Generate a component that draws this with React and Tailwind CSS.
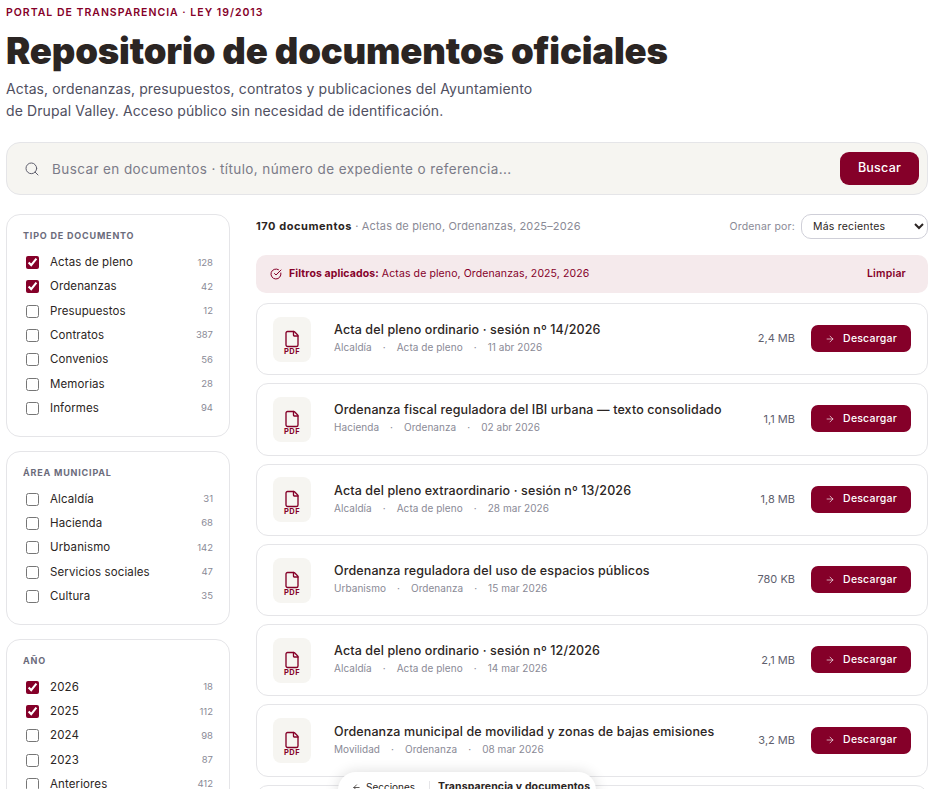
import { ArrowLeft, ArrowRight, File, Search } from "lucide-react";

const tipos = [
  ["Actas de pleno", 128, true],
  ["Ordenanzas", 42, true],
  ["Presupuestos", 12],
  ["Contratos", 387],
  ["Convenios", 56],
  ["Memorias", 28],
  ["Informes", 94],
];

const areas = [
  ["Alcaldía", 31],
  ["Hacienda", 68],
  ["Urbanismo", 142],
  ["Servicios sociales", 47],
  ["Cultura", 35],
];

const anios = [
  ["2026", 18, true],
  ["2025", 112, true],
  ["2024", 98],
  ["2023", 87],
  ["Anteriores", 412],
];

const docs = [
  ["Acta del pleno ordinario · sesión nº 14/2026", "Alcaldía", "Acta de pleno", "11 abr 2026", "2,4 MB"],
  ["Ordenanza fiscal reguladora del IBI urbana — texto consolidado", "Hacienda", "Ordenanza", "02 abr 2026", "1,1 MB"],
  ["Acta del pleno extraordinario · sesión nº 13/2026", "Alcaldía", "Acta de pleno", "28 mar 2026", "1,8 MB"],
  ["Ordenanza reguladora del uso de espacios públicos", "Urbanismo", "Ordenanza", "15 mar 2026", "780 KB"],
  ["Acta del pleno ordinario · sesión nº 12/2026", "Alcaldía", "Acta de pleno", "14 mar 2026", "2,1 MB"],
  ["Ordenanza municipal de movilidad y zonas de bajas emisiones", "Movilidad", "Ordenanza", "08 mar 2026", "3,2 MB"],
  ["Presupuesto general del ejercicio 2026", "Hacienda", "Presupuesto", "01 mar 2026", "4,6 MB"],
];

const FilterGroup = ({ title, items }) => (
  <section className="rounded-[14px] border border-[#e5e5e8] bg-white pl-[16px] pr-[16px] pt-[14px] pb-[15.5px]">
    <h3 className="mb-[7.5px] text-[9px] leading-[14px] font-bold tracking-[0.09em] text-[#6b6b7b] uppercase">
      {title}
    </h3>
    {items.map(([label, count, checked]) => (
      <label key={label} className="flex h-[24.3px] items-center">
        <input
          type="checkbox"
          defaultChecked={!!checked}
          className="ml-[3px] mr-[11px] size-[13px] accent-[#850029]"
        />
        <span className="flex-1 text-[11.5px] tracking-[0.01em] text-[#2b2523]">{label}</span>
        <span className="text-[9.5px] text-[#8a8a96]">{count}</span>
      </label>
    ))}
  </section>
);

const DocRow = ({ doc }) => {
  const [title, area, tipo, fecha, size] = doc;
  return (
    <article className="flex h-[72.3px] shrink-0 items-center rounded-[12px] border border-[#e5e5e8] bg-white pl-[16px] pr-[16px]">
      <div className="mr-[23px] flex h-[45px] w-[38px] shrink-0 flex-col items-center justify-center rounded-[8px] bg-[#f6f5f1] pt-[7px] text-[#850029]">
        <File size={18} strokeWidth={1.8} />
        <span className="text-[7.5px] leading-[8px] font-bold tracking-[0.06em]">PDF</span>
      </div>
      <div className="mb-[3px] min-w-0 flex-1">
        <h2 className="text-[12.5px] leading-[18px] font-[550] tracking-[0.01em] text-[#2b2523]">{title}</h2>
        <p className="mt-[1px] flex gap-[11px] text-[10px] leading-[14px] tracking-[0.005em] text-[#8a8a96]">
          <span>{area}</span>
          <span>·</span>
          <span>{tipo}</span>
          <span>·</span>
          <span>{fecha}</span>
        </p>
      </div>
      <span className="mb-[1px] mr-[16px] text-[11px] text-[#5f5f6e]">{size}</span>
      <button className="mb-[1px] flex h-[27px] w-[100px] items-center justify-center gap-[8px] rounded-[7px] bg-[#850029] text-[10.5px] font-medium tracking-[0.02em] text-white">
        <ArrowRight size={10} strokeWidth={1.6} />
        Descargar
      </button>
    </article>
  );
};

export default function App() {
  return (
    <div className="relative h-screen overflow-hidden bg-white pl-[6px] pr-[8px] font-['Inter',sans-serif]">
      <p className="pt-[6px] text-[10.5px] leading-[14px] font-semibold tracking-[0.095em] text-[#850029] uppercase">
        Portal de transparencia · Ley 19/2013
      </p>
      <h1 className="mt-[7px] text-[36.5px] leading-[48px] font-black tracking-[-0.005em] text-[#2b2523]">
        Repositorio de documentos oficiales
      </h1>
      <p className="mt-[3px] text-[14px] leading-[22px] tracking-[0.008em] text-[#4f4f5f]">
        Actas, ordenanzas, presupuestos, contratos y publicaciones del Ayuntamiento
        <br />
        de Drupal Valley. Acceso público sin necesidad de identificación.
      </p>

      <div className="mt-[20px] flex h-[53px] items-center rounded-[14px] border border-[#e5e5e8] bg-[#f6f5f1] pl-[17px] pr-[8px]">
        <Search size={16} strokeWidth={1.5} className="text-[#5f5f6e]" />
        <span className="ml-[12px] flex-1 pt-[1px] text-[13.5px] tracking-[0.03em] text-[#7b7b88]">
          Buscar en documentos · título, número de expediente o referencia...
        </span>
        <button className="h-[33px] w-[79px] rounded-[9px] bg-[#850029] text-[12.5px] font-medium tracking-[0.02em] text-white">
          Buscar
        </button>
      </div>

      <div className="mt-[19px] flex gap-[26px]">
        <aside className="flex w-[224px] shrink-0 flex-col gap-[13.6px]">
          <FilterGroup title="Tipo de documento" items={tipos} />
          <FilterGroup title="Área municipal" items={areas} />
          <FilterGroup title="Año" items={anios} />
        </aside>

        <main className="min-w-0 flex-1">
          <div className="flex h-[25px] items-center justify-between">
            <p className="text-[11px] tracking-[0.015em] text-[#8a8a96]">
              <strong className="font-bold tracking-[0.05em] text-[#2b2523]">170 documentos</strong> · Actas de pleno, Ordenanzas, 2025–2026
            </p>
            <div className="flex items-center gap-[6px]">
              <span className="text-[10.5px] tracking-[0.02em] text-[#8a8a96]">Ordenar por:</span>
              <select
                defaultValue="recientes"
                className="h-[25px] w-[127px] rounded-[10px] border border-[#cfcfd8] bg-white pl-[7px] text-[10.5px] tracking-[0.02em] text-[#2b2523]"
              >
                <option value="recientes">Más recientes</option>
                <option value="antiguos">Más antiguos</option>
              </select>
            </div>
          </div>

          <div className="mt-[16px] flex h-[38px] items-center rounded-[10px] bg-[#f5eaec] pl-[14px] pr-[22px] text-[#850029]">
            <svg width="12" height="12" viewBox="0 0 24 24" fill="none" stroke="currentColor" strokeWidth="2" strokeLinecap="round" strokeLinejoin="round">
              <path d="M21.8 10A10 10 0 1 1 17 3.3" />
              <path d="m9 11 3 3L22 4" />
            </svg>
            <p className="ml-[7px] flex-1 text-[10.5px] tracking-[0.01em]">
              <strong className="font-bold">Filtros aplicados:</strong> Actas de pleno, Ordenanzas, 2025, 2026
            </p>
            <button className="text-[10.5px] font-semibold tracking-[0.02em]">Limpiar</button>
          </div>

          <div className="mt-[10px] flex flex-col gap-[8px]">
            {docs.map((doc) => (
              <DocRow key={doc[0]} doc={doc} />
            ))}
          </div>
        </main>
      </div>

      {/* barra flotante de secciones */}
      <div className="absolute top-[772px] left-[338px] flex h-[34px] w-[258px] items-start rounded-t-[18px] bg-white pt-[9px] pl-[14px] shadow-[0_0_14px_rgba(0,0,0,0.14)]">
        <span className="flex items-center gap-[5px] text-[10px] leading-[12px] text-[#2b2523]">
          <ArrowLeft size={9} />
          Secciones
        </span>
        <span className="ml-[14px] mr-[8px] h-[16px] w-px bg-[#e5e5e8]" />
        <span className="text-[10.5px] leading-[12px] font-bold tracking-[0.01em] text-[#2b2523]">Transparencia y documentos</span>
      </div>
    </div>
  );
}
